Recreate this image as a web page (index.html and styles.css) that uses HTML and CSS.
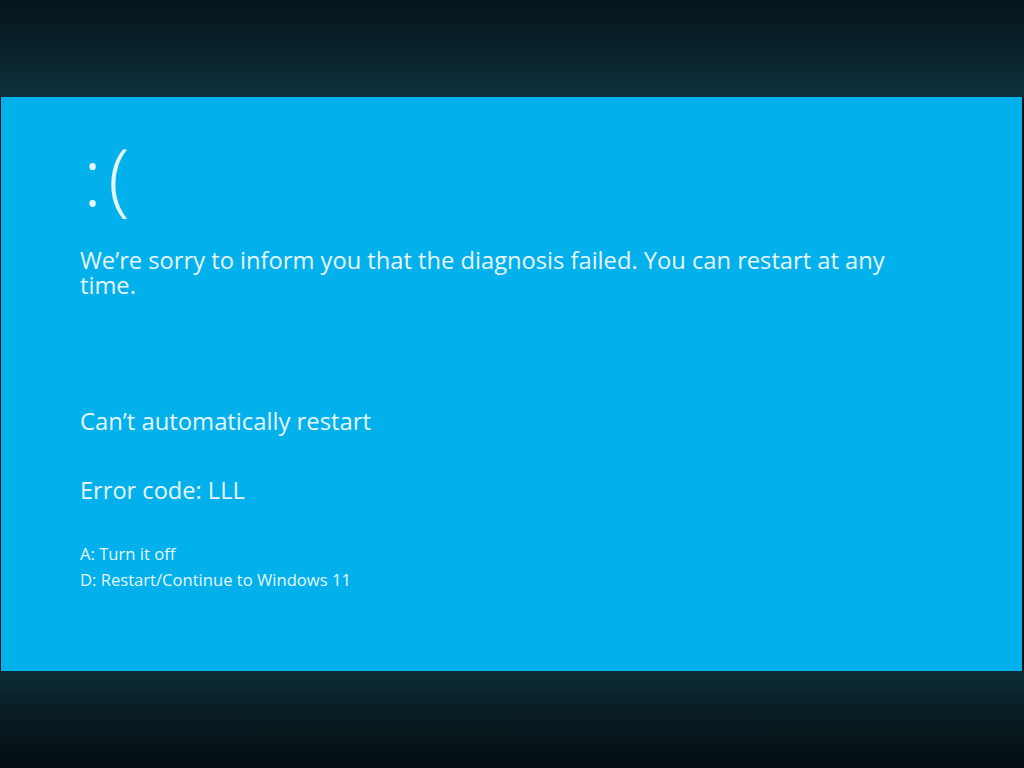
FILE: index.html
```html
<!DOCTYPE html>
<html lang="en">
<head>
<meta charset="utf-8">
<title>Diagnosis failed</title>
<link rel="stylesheet" href="styles.css">
</head>
<body>
<div class="band band-top"></div>
<main class="screen">
  <div class="face">:(</div>
  <p class="message">We’re sorry to inform you that the diagnosis failed. You can restart at any time.</p>
  <p class="status">Can’t automatically restart</p>
  <p class="code">Error code: LLL</p>
  <ul class="options">
    <li>A: Turn it off</li>
    <li>D: Restart/Continue to Windows 11</li>
  </ul>
</main>
<div class="band band-bottom"></div>
</body>
</html>
```
FILE: styles.css
```css
html, body {
  margin: 0;
  padding: 0;
}
body {
  width: 1024px;
  height: 768px;
  overflow: hidden;
  background: #06141a;
  display: flex;
  flex-direction: column;
  font-family: "Open Sans", "Liberation Sans", sans-serif;
}
.band {
  height: 97px;
  flex: none;
}
.band-top {
  background: linear-gradient(to bottom, #05131a 0%, #0a252d 60%, #0c313d 100%);
}
.band-bottom {
  background: linear-gradient(to bottom, #0c2c35 0%, #07191f 55%, #040d11 100%);
}
.screen {
  height: 574px;
  flex: none;
  margin: 0 2px 0 1px;
  background: #02b1ec;
  box-sizing: border-box;
  padding: 33px 0 0 79px;
  color: #e6f6fc;
  font-weight: 400;
}
.face {
  font-size: 80px;
  line-height: 90px;
  font-weight: 300;
  letter-spacing: 6px;
  padding-left: 3px;
}
.message {
  margin: 28px 0 0;
  font-size: 23.7px;
  line-height: 25px;
  width: 830px;
}
.status {
  margin: 108px 0 0;
  font-size: 23.8px;
  line-height: 30px;
}
.code {
  margin: 39px 0 0;
  font-size: 23.6px;
  line-height: 30px;
}
.options {
  list-style: none;
  margin: 36px 0 0;
  padding: 0;
  font-size: 16.6px;
  line-height: 26px;
}
```
